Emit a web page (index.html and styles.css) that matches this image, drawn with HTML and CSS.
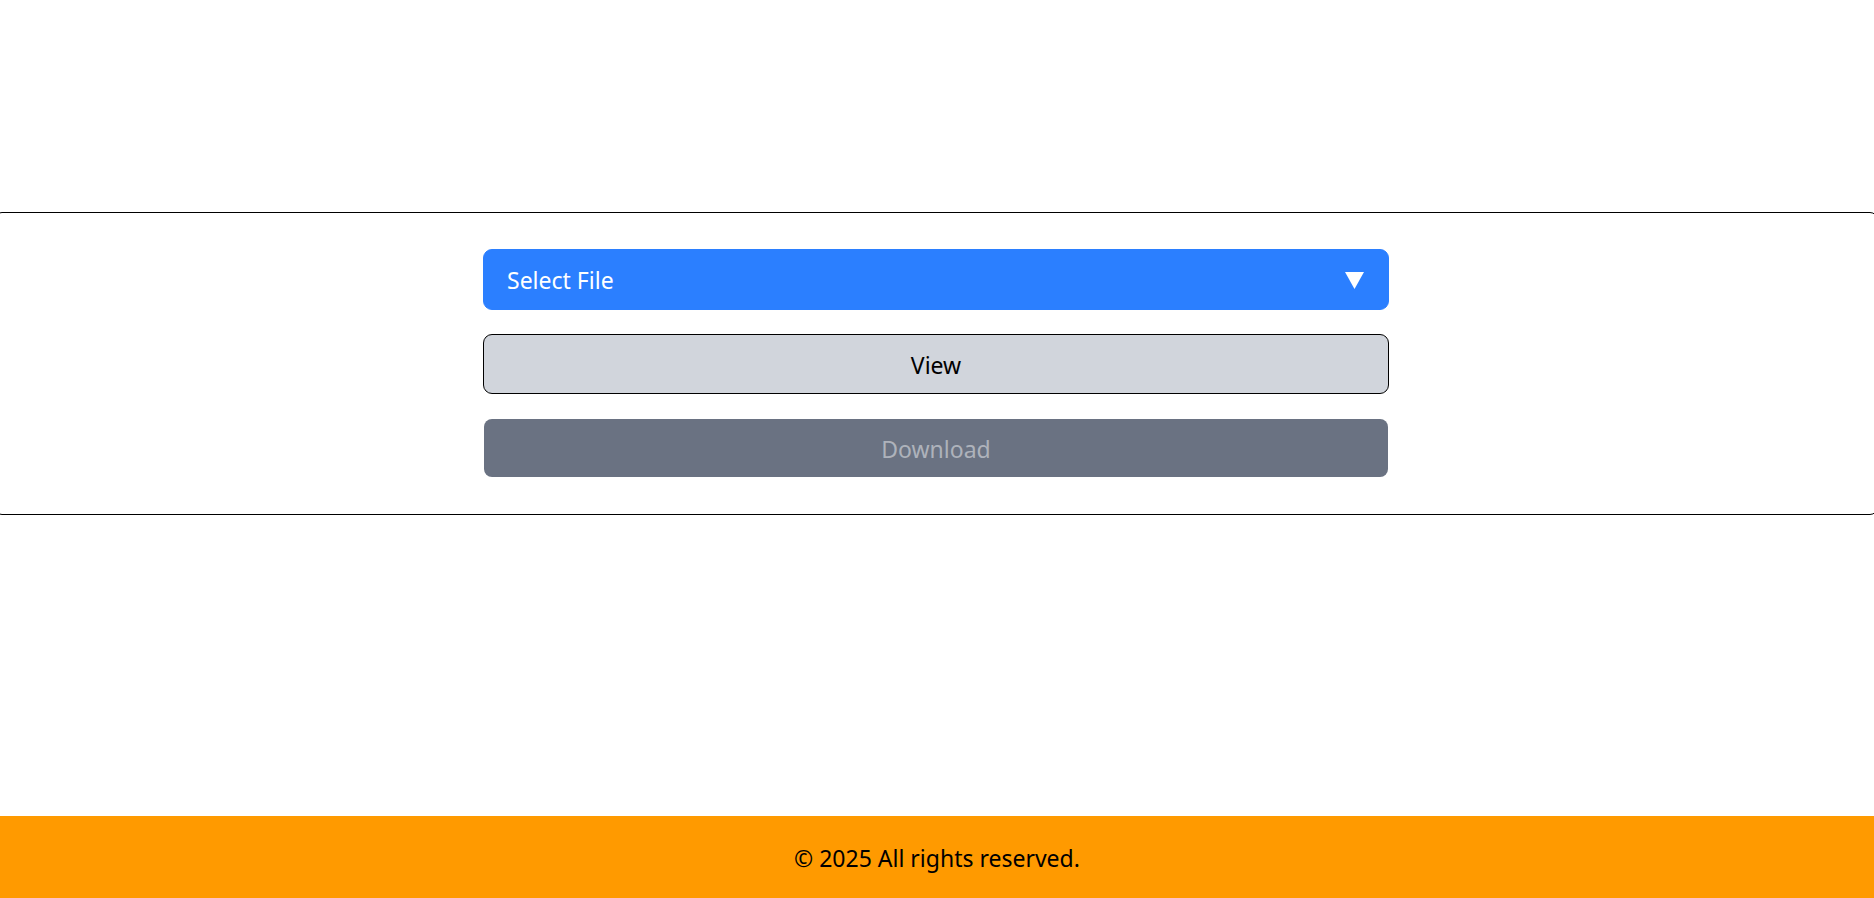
FILE: index.html
```html
<!DOCTYPE html>
<html lang="en">
<head>
<meta charset="utf-8">
<meta name="viewport" content="width=device-width, initial-scale=1">
<title>Files</title>
<link rel="stylesheet" href="styles.css">
</head>
<body class="page">
<main class="main">
  <form class="panel">
    <div class="picker">
      <select class="control picker-select" aria-label="Select File">
        <option>Select File</option>
      </select>
      <svg class="picker-arrow" viewBox="0 0 19 17" aria-hidden="true"><path d="M0 0H19L9.5 17Z" fill="currentColor"/></svg>
    </div>
    <button class="control view" type="button">View</button>
    <button class="control download" type="button" disabled>Download</button>
  </form>
</main>
<footer class="footer">© 2025 All rights reserved.</footer>
</body>
</html>
```

FILE: styles.css
```css
* {
  box-sizing: border-box;
}

.page {
  margin: 0;
  min-height: 100vh;
  display: flex;
  flex-direction: column;
  overflow-x: hidden;
  background: #fff;
  color: #000;
  font-family: "Segoe UI", "Noto Sans", sans-serif;
  font-size: 23px;
  line-height: 36px;
}

.main {
  flex: 1;
  padding-top: 212px;
}

.panel {
  margin: 0 -4px 0 -6px;
  padding: 36px 24px;
  display: flex;
  flex-direction: column;
  align-items: center;
  gap: 24px;
  border: 1px solid #000;
  border-radius: 8px;
}

.picker {
  position: relative;
  width: 100%;
  max-width: 906px;
}

.control {
  display: block;
  width: 100%;
  max-width: 906px;
  height: 60px;
  margin: 0;
  padding: 2px 24px 0;
  border: 1px solid #000;
  border-radius: 9px;
  font: inherit;
}

.picker-select {
  appearance: none;
  height: 61px;
  padding: 0 23px;
  border-color: #2b7fff;
  background: #2b7fff;
  color: #fff;
}

.picker-arrow {
  position: absolute;
  top: 23px;
  right: 25px;
  width: 19px;
  height: 17px;
  color: #fff;
  pointer-events: none;
}

.view {
  background: #d1d5dc;
  color: #000;
}

.download {
  border-color: transparent;
  background: #6a7282;
  background-clip: padding-box;
  color: #aeb2bb;
}

.footer {
  padding: 24px 24px 22px;
  background: #ff9a00;
  text-align: center;
}
```
